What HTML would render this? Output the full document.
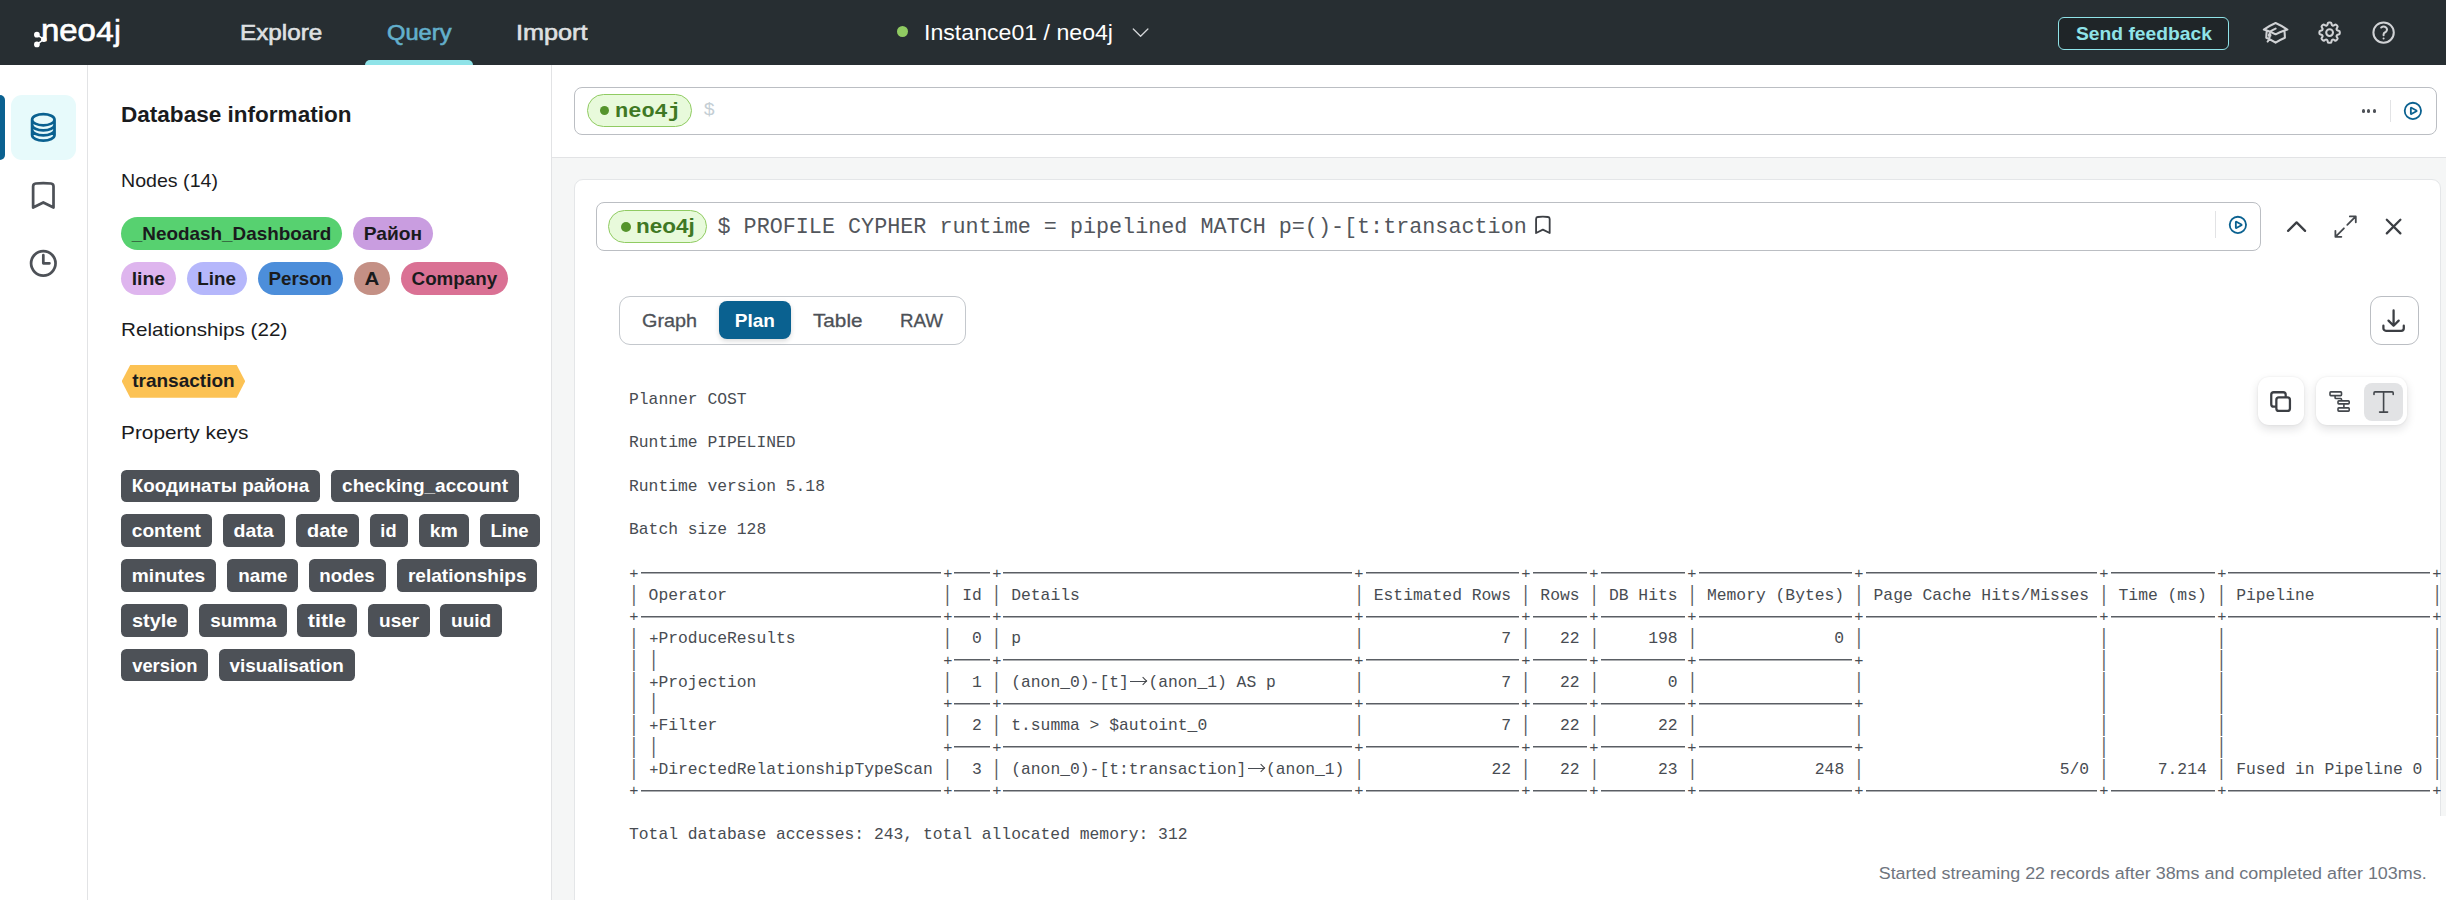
<!DOCTYPE html>
<html lang="en"><head><meta charset="utf-8"><title>neo4j Query</title>
<style>
*{box-sizing:border-box}
html,body{margin:0;padding:0}
body{width:2446px;height:900px;overflow:hidden;position:relative;background:#f5f6f6;font-family:"Liberation Sans",sans-serif;color:#1a1b1d}
.t{position:absolute;white-space:pre;display:block}
.abs{position:absolute}
svg{position:absolute;overflow:visible}
.ic{fill:none;stroke-linecap:round;stroke-linejoin:round}
#hdr{position:absolute;left:0;top:0;width:2446px;height:65px;background:#272e32}
#rail{position:absolute;left:0;top:65px;width:88px;height:835px;background:#fff;border-right:1px solid #e2e3e5}
#side{position:absolute;left:88px;top:65px;width:464px;height:835px;background:#fff;border-right:1px solid #e2e3e5}
#top{position:absolute;left:552px;top:65px;width:1894px;height:93px;background:#fff;border-bottom:1px solid #e2e3e5}
#card{position:absolute;left:574px;top:179px;width:1867px;height:740px;background:#fff;border:1px solid #e4e6e8;border-radius:9px;overflow:hidden}
.chip{position:absolute;height:32.64px;font:700 19.04px/34.64px "Liberation Sans",sans-serif;text-align:center;white-space:pre;color:#1a1b1d}
.chip b{display:inline-block;font-weight:700}
.n{border-radius:17px}
.p{border-radius:5.4px;background:#4d5157;color:#fff}
.box{position:absolute;border:1px solid #bbbec3;border-radius:8px;background:#fff}
.pill{position:absolute;border:1px solid #90cb62;background:#e8fadb;border-radius:17px}
pre{position:absolute;margin:0;left:629px;top:388.7px;font:400 16.334px/21.76px "Liberation Mono",monospace;color:#484c52;white-space:pre}
pre .d{color:transparent;background:linear-gradient(#5a5e64,#5a5e64) no-repeat 2px 8.5px/calc(100% - 4px) 1.5px}
pre i{display:inline-block;font-style:normal;transform:scaleY(1.3);transform-origin:50% 52%;color:#5a5e64}
pre b{display:inline-block;font-weight:400;transform:scale(.94)}
pre .ar{position:relative;color:transparent}
pre .ar::before{content:"";position:absolute;left:1.5px;top:8.3px;width:16px;height:1.1px;background:#484c52}
pre .ar::after{content:"";position:absolute;left:11.2px;top:5.6px;width:6px;height:6px;border-top:1.1px solid #3c3f44;border-right:1.1px solid #3c3f44;transform:rotate(45deg);box-sizing:border-box}
</style></head><body>

<div id="hdr">
<svg style="left:30px;top:12px" width="100" height="44" viewBox="30 12 100 44">
<g stroke="#fff" stroke-width="1.5" fill="#fff"><line x1="36.9" y1="34.7" x2="43.8" y2="39.3"/><line x1="43.8" y1="39.3" x2="36.9" y2="44.4"/>
<circle cx="36.9" cy="34.7" r="2.85" stroke="none"/><circle cx="43.8" cy="39.3" r="2.7" stroke="none"/><circle cx="36.9" cy="44.4" r="2.85" stroke="none"/></g>
<text y="41" font-family="Liberation Sans, sans-serif" fill="#fff" stroke="#fff" stroke-width="0.7"><tspan x="40.9" font-size="31.4" textLength="55" lengthAdjust="spacingAndGlyphs">neo</tspan><tspan x="96.3" font-size="27.7" textLength="17.4" lengthAdjust="spacingAndGlyphs">4</tspan><tspan x="114.2" font-size="29">j</tspan></text>
</svg>
<span class="t" style="left:240.00px;transform-origin:0 50%;top:22.00px;font:400 21.76px/1 'Liberation Sans', sans-serif;color:#dfe0e2;transform:scaleX(1.1146);-webkit-text-stroke:0.6px #dfe0e2;">Explore</span>
<span class="t" style="left:386.60px;transform-origin:0 50%;top:22.00px;font:400 21.76px/1 'Liberation Sans', sans-serif;color:#63b0cc;transform:scaleX(1.0889);-webkit-text-stroke:0.6px #63b0cc;">Query</span>
<span class="t" style="left:515.80px;transform-origin:0 50%;top:22.00px;font:400 21.76px/1 'Liberation Sans', sans-serif;color:#dfe0e2;transform:scaleX(1.1599);-webkit-text-stroke:0.6px #dfe0e2;">Import</span>
<div class="abs" style="left:365px;top:60px;width:108px;height:5px;background:#8fe3e8;border-radius:5px 5px 0 0"></div>
<div class="abs" style="left:897px;top:26px;width:11px;height:11px;border-radius:50%;background:#90cb62"></div>
<span class="t" style="left:924.00px;transform-origin:0 50%;top:22.00px;font:400 21.76px/1 'Liberation Sans', sans-serif;color:#fff;transform:scaleX(1.0632);">Instance01 / neo4j</span>
<svg class="ic" style="left:1127.4px;top:19.4px" width="27.2" height="27.2" viewBox="0 0 24 24" stroke="#d5d7da" stroke-width="1.3"><path d="m19.5 8.25-7.5 7.5-7.5-7.5" transform="translate(12 12) scale(0.86) translate(-12 -12)"/></svg>
<div class="abs" style="left:2058px;top:17px;width:171px;height:33px;border:1px solid #8fe3e8;border-radius:6px;background:#1f2528"></div>
<span class="t" style="left:2075.50px;transform-origin:0 50%;top:24.00px;font:700 19.04px/1 'Liberation Sans', sans-serif;color:#8fe3e8;transform:scaleX(1.0124);">Send feedback</span>
<svg class="ic" style="left:2262.10px;top:18.90px" width="27.2" height="27.2" viewBox="0 0 24 24" stroke="#d0d2d5" stroke-width="1.8"><path d="M4.26 10.147a60.438 60.438 0 0 0-.491 6.347A48.62 48.62 0 0 1 12 20.904a48.62 48.62 0 0 1 8.232-4.41 60.46 60.46 0 0 0-.491-6.347m-15.482 0a50.636 50.636 0 0 0-2.658-.813A59.906 59.906 0 0 1 12 3.493a59.903 59.903 0 0 1 10.399 5.84c-.896.248-1.783.52-2.658.814m-15.482 0A50.717 50.717 0 0 1 12 13.489a50.702 50.702 0 0 1 7.74-3.342M6.75 15a.75.75 0 1 0 0-1.5.75.75 0 0 0 0 1.5Zm0 0v-3.675A55.378 55.378 0 0 1 12 8.443m-7.007 11.55A5.981 5.981 0 0 0 6.75 15.75v-1.5"/></svg>
<svg class="ic" style="left:2316.00px;top:19.00px" width="27.2" height="27.2" viewBox="0 0 24 24" stroke="#d0d2d5" stroke-width="1.8"><path d="M10.343 3.94c.09-.542.56-.94 1.11-.94h1.093c.55 0 1.02.398 1.11.94l.149.894c.07.424.384.764.78.93.398.164.855.142 1.205-.108l.737-.527a1.125 1.125 0 0 1 1.45.12l.773.774c.39.389.44 1.002.12 1.45l-.527.737c-.25.35-.272.806-.107 1.204.165.397.505.71.93.78l.893.15c.543.09.94.559.94 1.109v1.094c0 .55-.397 1.02-.94 1.11l-.894.149c-.424.07-.764.383-.929.78-.165.398-.143.854.107 1.204l.527.738c.32.447.269 1.06-.12 1.45l-.774.773a1.125 1.125 0 0 1-1.449.12l-.738-.527c-.35-.25-.806-.272-1.203-.107-.398.165-.71.505-.781.929l-.149.894c-.09.542-.56.94-1.11.94h-1.094c-.55 0-1.019-.398-1.11-.94l-.148-.894c-.071-.424-.384-.764-.781-.93-.398-.164-.854-.142-1.204.108l-.738.527c-.447.32-1.06.269-1.45-.12l-.773-.774a1.125 1.125 0 0 1-.12-1.45l.527-.737c.25-.35.272-.806.108-1.204-.165-.397-.506-.71-.93-.78l-.894-.15c-.542-.09-.94-.56-.94-1.109v-1.094c0-.55.398-1.02.94-1.11l.894-.149c.424-.07.765-.383.93-.78.165-.398.143-.854-.108-1.204l-.526-.738a1.125 1.125 0 0 1 .12-1.45l.773-.773a1.125 1.125 0 0 1 1.45-.12l.737.527c.35.25.807.272 1.204.107.397-.165.71-.505.78-.929l.15-.894Z"/><path d="M15 12a3 3 0 1 1-6 0 3 3 0 0 1 6 0Z"/></svg>
<svg class="ic" style="left:2370.10px;top:18.90px" width="27.2" height="27.2" viewBox="0 0 24 24" stroke="#d0d2d5" stroke-width="1.8"><path d="M9.879 7.519c1.171-1.025 3.071-1.025 4.242 0 1.172 1.025 1.172 2.687 0 3.712-.203.179-.43.326-.67.442-.745.361-1.45.999-1.45 1.827v.75M21 12a9 9 0 1 1-18 0 9 9 0 0 1 18 0Zm-9 5.250h.008v.008H12v-.008Z"/></svg>
</div>
<div id="rail"></div>
<div class="abs" style="left:0;top:95px;width:5px;height:65px;background:#0a6190;border-radius:0 5px 5px 0"></div>
<div class="abs" style="left:11px;top:95px;width:65.3px;height:65px;background:#e7fafb;border-radius:11px"></div>
<svg class="ic" style="left:26.98px;top:111.08px" width="32.64" height="32.64" viewBox="0 0 24 24" stroke="#0a6190" stroke-width="2"><path d="M20.25 6.375c0 2.278-3.694 4.125-8.25 4.125S3.75 8.653 3.75 6.375m16.5 0c0-2.278-3.694-4.125-8.25-4.125S3.75 4.097 3.75 6.375m16.5 0v11.25c0 2.278-3.694 4.125-8.25 4.125s-8.25-1.847-8.25-4.125V6.375m16.5 0v3.75m-16.5-3.75v3.75m16.5 0v3.75C20.25 16.153 16.556 18 12 18s-8.25-1.847-8.25-4.125v-3.75m16.5 0c0 2.278-3.694 4.125-8.25 4.125s-8.25-1.847-8.25-4.125"/></svg>
<svg class="ic" style="left:27.08px;top:179.18px" width="32.64" height="32.64" viewBox="0 0 24 24" stroke="#4d5157" stroke-width="2"><path d="M17.593 3.322c1.1.128 1.907 1.077 1.907 2.185V21L12 17.25 4.5 21V5.507c0-1.108.806-2.057 1.907-2.185a48.507 48.507 0 0 1 11.186 0Z"/></svg>
<svg class="ic" style="left:27.08px;top:247.08px" width="32.64" height="32.64" viewBox="0 0 24 24" stroke="#4d5157" stroke-width="2"><path d="M12 6v6h4.5m4.5 0a9 9 0 1 1-18 0 9 9 0 0 1 18 0Z"/></svg>
<div id="side"></div>
<span class="t" style="left:121.00px;transform-origin:0 50%;top:104.00px;font:700 21.76px/1 'Liberation Sans', sans-serif;color:#1a1b1d;transform:scaleX(1.0365);">Database information</span>
<span class="t" style="left:121.00px;transform-origin:0 50%;top:171.00px;font:400 19.04px/1 'Liberation Sans', sans-serif;color:#1a1b1d;transform:scaleX(1.0302);">Nodes (14)</span>
<span class="t" style="left:120.80px;transform-origin:0 50%;top:320.00px;font:400 19.04px/1 'Liberation Sans', sans-serif;color:#1a1b1d;transform:scaleX(1.0842);">Relationships (22)</span>
<span class="t" style="left:120.80px;transform-origin:0 50%;top:423.00px;font:400 19.04px/1 'Liberation Sans', sans-serif;color:#1a1b1d;transform:scaleX(1.0942);">Property keys</span>
<div class="chip n" style="left:121.0px;top:217.20px;width:220.8px;background:#57d170;"><b style="transform:scaleX(0.9923)">_Neodash_Dashboard</b></div>
<div class="chip n" style="left:353.0px;top:217.20px;width:79.7px;background:#c99de0;"><b style="transform:scaleX(1.0076)">Район</b></div>
<div class="chip n" style="left:121.0px;top:262.00px;width:54.9px;background:#deb5ee;"><b style="transform:scaleX(1.0214)">line</b></div>
<div class="chip n" style="left:186.9px;top:262.00px;width:60.1px;background:#b5b7fb;"><b style="transform:scaleX(0.9891)">Line</b></div>
<div class="chip n" style="left:258.0px;top:262.00px;width:85.0px;background:#4c8eda;"><b style="transform:scaleX(0.9856)">Person</b></div>
<div class="chip n" style="left:353.8px;top:262.00px;width:36.2px;background:#c49085;"><b style="transform:scaleX(1.0764)">A</b></div>
<div class="chip n" style="left:401.0px;top:262.00px;width:107.0px;background:#da7194;"><b style="transform:scaleX(0.9871)">Company</b></div>
<div class="chip" style="left:121.7px;top:365px;width:123.5px;line-height:32.64px;background:#fcc254;clip-path:polygon(8.5px 0,calc(100% - 8.5px) 0,100% 50%,calc(100% - 8.5px) 100%,8.5px 100%,0 50%)"><b>transaction</b></div>
<div class="chip p" style="left:121.0px;top:470.00px;width:198.8px;height:31.9px;line-height:31.6px;"><b style="transform:scaleX(0.9913)">Коодинаты района</b></div>
<div class="chip p" style="left:331.3px;top:470.00px;width:187.3px;height:31.9px;line-height:31.6px;"><b style="transform:scaleX(0.9990)">checking_account</b></div>
<div class="chip p" style="left:121.0px;top:514.10px;width:90.7px;"><b style="transform:scaleX(1.0082)">content</b></div>
<div class="chip p" style="left:223.2px;top:514.10px;width:61.6px;"><b style="transform:scaleX(1.0271)">data</b></div>
<div class="chip p" style="left:296.3px;top:514.10px;width:62.3px;"><b style="transform:scaleX(1.0450)">date</b></div>
<div class="chip p" style="left:370.1px;top:514.10px;width:37.6px;"><b style="transform:scaleX(0.9573)">id</b></div>
<div class="chip p" style="left:419.2px;top:514.10px;width:49.6px;"><b style="transform:scaleX(1.0249)">km</b></div>
<div class="chip p" style="left:480.3px;top:514.10px;width:59.5px;"><b style="transform:scaleX(0.9738)">Line</b></div>
<div class="chip p" style="left:121.0px;top:559.30px;width:94.8px;"><b style="transform:scaleX(1.0059)">minutes</b></div>
<div class="chip p" style="left:227.0px;top:559.30px;width:70.8px;"><b style="transform:scaleX(0.9936)">name</b></div>
<div class="chip p" style="left:309.0px;top:559.30px;width:76.7px;"><b style="transform:scaleX(0.9867)">nodes</b></div>
<div class="chip p" style="left:397.0px;top:559.30px;width:140.0px;"><b style="transform:scaleX(1.0012)">relationships</b></div>
<div class="chip p" style="left:121.0px;top:604.30px;width:66.9px;"><b style="transform:scaleX(1.0486)">style</b></div>
<div class="chip p" style="left:199.2px;top:604.30px;width:87.6px;"><b style="transform:scaleX(0.9934)">summa</b></div>
<div class="chip p" style="left:297.0px;top:604.30px;width:59.8px;"><b style="transform:scaleX(1.1346)">title</b></div>
<div class="chip p" style="left:368.1px;top:604.30px;width:61.6px;"><b style="transform:scaleX(0.9999)">user</b></div>
<div class="chip p" style="left:440.2px;top:604.30px;width:61.5px;"><b style="transform:scaleX(0.9982)">uuid</b></div>
<div class="chip p" style="left:121.0px;top:649.40px;width:86.8px;height:31.7px;line-height:33.6px;"><b style="transform:scaleX(0.9660)">version</b></div>
<div class="chip p" style="left:219.1px;top:649.40px;width:135.7px;height:31.7px;line-height:33.6px;"><b style="transform:scaleX(0.9914)">visualisation</b></div>
<div id="top"></div>
<div class="box" style="left:574px;top:87px;width:1863px;height:48px"></div>
<div class="pill" style="left:587px;top:94px;width:104.5px;height:32.7px"></div>
<div class="abs" style="left:599.8px;top:106.1px;width:9px;height:9px;border-radius:50%;background:#55942c"></div>
<span class="t" style="left:614.80px;transform-origin:0 50%;top:101.00px;font:700 21px/1 'Liberation Mono', monospace;color:#3f7824;transform:scaleX(1.0474);">neo4j</span>
<span class="t" style="left:703.50px;transform-origin:0 50%;top:101.00px;font:400 19.04px/1 'Liberation Mono', monospace;color:#c4ced4;">$</span>
<div class="abs" style="left:2361.65px;top:109.25px;width:3.3px;height:3.3px;border-radius:50%;background:#4d5157"></div>
<div class="abs" style="left:2367.15px;top:109.25px;width:3.3px;height:3.3px;border-radius:50%;background:#4d5157"></div>
<div class="abs" style="left:2372.65px;top:109.25px;width:3.3px;height:3.3px;border-radius:50%;background:#4d5157"></div>
<div class="abs" style="left:2390px;top:100px;width:1px;height:22px;background:#e2e3e5"></div>
<svg class="ic" style="left:2402.02px;top:100.02px" width="21.76" height="21.76" viewBox="0 0 24 24" stroke="#0a6190" stroke-width="2"><path d="M21 12a9 9 0 1 1-18 0 9 9 0 0 1 18 0Z"/><path d="M15.91 11.672a.375.375 0 0 1 0 .656l-5.603 3.113a.375.375 0 0 1-.557-.328V8.887c0-.286.307-.466.557-.327l5.603 3.112Z"/></svg>
<div id="card"></div>
<div class="box" style="left:596px;top:202px;width:1665px;height:49px"></div>
<div class="pill" style="left:608px;top:210px;width:99px;height:32.7px"></div>
<div class="abs" style="left:620.5px;top:221.8px;width:10.2px;height:10.2px;border-radius:50%;background:#55942c"></div>
<span class="t" style="left:636.30px;transform-origin:0 50%;top:216.00px;font:700 20.4px/1 'Liberation Sans', sans-serif;color:#3f7824;transform:scaleX(1.1039);">neo4j</span>
<span class="t" style="left:717.50px;transform-origin:0 50%;top:217.00px;font:400 21.76px/1 'Liberation Mono', monospace;color:#52565c;">$ PROFILE CYPHER runtime = pipelined MATCH p=()-[t:transaction</span>
<svg class="ic" style="left:1532.02px;top:214.02px" width="21.76" height="21.76" viewBox="0 0 24 24" stroke="#3c3f44" stroke-width="2"><path d="M17.593 3.322c1.1.128 1.907 1.077 1.907 2.185V21L12 17.25 4.5 21V5.507c0-1.108.806-2.057 1.907-2.185a48.507 48.507 0 0 1 11.186 0Z"/></svg>
<div class="abs" style="left:2215px;top:211px;width:1px;height:27px;background:#e2e3e5"></div>
<svg class="ic" style="left:2227.02px;top:213.92px" width="21.76" height="21.76" viewBox="0 0 24 24" stroke="#0a6190" stroke-width="2"><path d="M21 12a9 9 0 1 1-18 0 9 9 0 0 1 18 0Z"/><path d="M15.91 11.672a.375.375 0 0 1 0 .656l-5.603 3.113a.375.375 0 0 1-.557-.328V8.887c0-.286.307-.466.557-.327l5.603 3.112Z"/></svg>
<svg class="ic" style="left:2282.90px;top:212.90px" width="27.2" height="27.2" viewBox="0 0 24 24" stroke="#3c3f44" stroke-width="2"><path d="m4.5 15.75 7.5-7.5 7.5 7.5"/></svg>
<svg class="ic" style="left:2332.00px;top:213.00px" width="27.2" height="27.2" viewBox="0 0 24 24" stroke="#45494e" stroke-width="1.6"><path d="M13.5 10.5 21 3m0 0h-5.25M21 3v5.25M10.5 13.5 3 21m0 0h5.25M3 21v-5.25"/></svg>
<svg class="ic" style="left:2380.10px;top:212.90px" width="27.2" height="27.2" viewBox="0 0 24 24" stroke="#3c3f44" stroke-width="2"><path d="M6 18 18 6M6 6l12 12"/></svg>
<div class="abs" style="left:619px;top:296px;width:347px;height:49px;border:1px solid #c4c8cd;border-radius:11px;background:#fff"></div>
<div class="abs" style="left:719px;top:301px;width:72px;height:38px;background:#0a6190;border-radius:8px;box-shadow:0 2px 5px rgba(0,0,0,.15)"></div>
<span class="t" style="left:641.50px;transform-origin:0 50%;top:311.00px;font:400 19.04px/1 'Liberation Sans', sans-serif;color:#4d5157;transform:scaleX(1.0396);-webkit-text-stroke:0.3px #4d5157;">Graph</span>
<span class="t" style="left:734.80px;transform-origin:0 50%;top:311.00px;font:700 19.04px/1 'Liberation Sans', sans-serif;color:#fff;">Plan</span>
<span class="t" style="left:813.00px;transform-origin:0 50%;top:311.00px;font:400 19.04px/1 'Liberation Sans', sans-serif;color:#4d5157;transform:scaleX(1.0879);-webkit-text-stroke:0.3px #4d5157;">Table</span>
<span class="t" style="left:900.00px;transform-origin:0 50%;top:311.00px;font:400 19.04px/1 'Liberation Sans', sans-serif;color:#4d5157;transform:scaleX(0.9839);-webkit-text-stroke:0.3px #4d5157;">RAW</span>
<div class="abs" style="left:2370px;top:296px;width:49px;height:49px;border:1px solid #bbbec3;border-radius:11px;background:#fff"></div>
<svg class="ic" style="left:2380.00px;top:307.10px" width="27.2" height="27.2" viewBox="0 0 24 24" stroke="#3c3f44" stroke-width="2"><path d="M3 16.5v2.25A2.25 2.25 0 0 0 5.25 21h13.5A2.25 2.25 0 0 0 21 18.750V16.5M16.5 12 12 16.5m0 0L7.5 12m4.5 4.5V3"/></svg>
<div class="abs" style="left:2257.8px;top:377.4px;width:46.5px;height:47.5px;border-radius:11px;background:#fff;box-shadow:0 4px 10px rgba(26,27,29,.13),0 0 2px rgba(26,27,29,.08)"></div>
<svg class="ic" style="left:2266.90px;top:387.90px" width="27.2" height="27.2" viewBox="0 0 24 24" stroke="#3c3f44" stroke-width="2"><path d="M16.5 8.25V6a2.25 2.25 0 0 0-2.25-2.25H6A2.25 2.25 0 0 0 3.75 6v8.25A2.25 2.25 0 0 0 6 16.5h2.25m8.25-8.25H18a2.25 2.25 0 0 1 2.25 2.25V18A2.25 2.25 0 0 1 18 20.25h-7.5A2.250 2.250 0 0 1 8.25 18v-1.5m8.25-8.25h-6a2.25 2.25 0 0 0-2.25 2.25v6"/></svg>
<div class="abs" style="left:2316.4px;top:377.4px;width:91px;height:47.5px;border-radius:11px;background:#fff;box-shadow:0 4px 10px rgba(26,27,29,.13),0 0 2px rgba(26,27,29,.08)"></div>
<div class="abs" style="left:2364.1px;top:383.1px;width:38.5px;height:37.7px;border-radius:8px;background:#e2e3e5"></div>
<svg class="ic" style="left:2320px;top:380px" width="90" height="44" viewBox="2320 380 90 44" stroke="#43474c" stroke-width="1.6">
<rect x="2330" y="391.9" width="11.5" height="3.7" rx="0.8"/><rect x="2338" y="400.9" width="11.2" height="3" rx="0.8"/><rect x="2338" y="407.9" width="11.2" height="3.2" rx="0.8"/>
<path d="M2335.1 396v1.7q0 .8.8.8h4.8q.8 0 .8.800v1M2343.900 404.400v3"/>
<path d="M2374 394.400v-1.500a1 1 0 0 1 1-1h17.200a1 1 0 0 1 1 1v1.500M2383.600 391.900V412M2379.600 412.100h8"/></svg>
<div class="abs" style="left:575px;top:360px;width:1865.5px;height:540px;overflow:hidden"><pre style="left:54px;top:28.7px">Planner COST

Runtime PIPELINED

Runtime version 5.18

Batch size 128

<b>+</b><span class="d">-------------------------------</span><b>+</b><span class="d">----</span><b>+</b><span class="d">------------------------------------</span><b>+</b><span class="d">----------------</span><b>+</b><span class="d">------</span><b>+</b><span class="d">---------</span><b>+</b><span class="d">----------------</span><b>+</b><span class="d">------------------------</span><b>+</b><span class="d">-----------</span><b>+</b><span class="d">---------------------</span><b>+</b>
<i>|</i> Operator                      <i>|</i> Id <i>|</i> Details                            <i>|</i> Estimated Rows <i>|</i> Rows <i>|</i> DB Hits <i>|</i> Memory (Bytes) <i>|</i> Page Cache Hits/Misses <i>|</i> Time (ms) <i>|</i> Pipeline            <i>|</i>
<b>+</b><span class="d">-------------------------------</span><b>+</b><span class="d">----</span><b>+</b><span class="d">------------------------------------</span><b>+</b><span class="d">----------------</span><b>+</b><span class="d">------</span><b>+</b><span class="d">---------</span><b>+</b><span class="d">----------------</span><b>+</b><span class="d">------------------------</span><b>+</b><span class="d">-----------</span><b>+</b><span class="d">---------------------</span><b>+</b>
<i>|</i> <b>+</b>ProduceResults               <i>|</i>  0 <i>|</i> p                                  <i>|</i>              7 <i>|</i>   22 <i>|</i>     198 <i>|</i>              0 <i>|</i>                        <i>|</i>           <i>|</i>                     <i>|</i>
<i>|</i> <i>|</i>                             <b>+</b><span class="d">----</span><b>+</b><span class="d">------------------------------------</span><b>+</b><span class="d">----------------</span><b>+</b><span class="d">------</span><b>+</b><span class="d">---------</span><b>+</b><span class="d">----------------</span><b>+</b>                        <i>|</i>           <i>|</i>                     <i>|</i>
<i>|</i> <b>+</b>Projection                   <i>|</i>  1 <i>|</i> (anon_0)-[t]<span class="ar">-&gt;</span>(anon_1) AS p        <i>|</i>              7 <i>|</i>   22 <i>|</i>       0 <i>|</i>                <i>|</i>                        <i>|</i>           <i>|</i>                     <i>|</i>
<i>|</i> <i>|</i>                             <b>+</b><span class="d">----</span><b>+</b><span class="d">------------------------------------</span><b>+</b><span class="d">----------------</span><b>+</b><span class="d">------</span><b>+</b><span class="d">---------</span><b>+</b><span class="d">----------------</span><b>+</b>                        <i>|</i>           <i>|</i>                     <i>|</i>
<i>|</i> <b>+</b>Filter                       <i>|</i>  2 <i>|</i> t.summa &gt; $autoint_0               <i>|</i>              7 <i>|</i>   22 <i>|</i>      22 <i>|</i>                <i>|</i>                        <i>|</i>           <i>|</i>                     <i>|</i>
<i>|</i> <i>|</i>                             <b>+</b><span class="d">----</span><b>+</b><span class="d">------------------------------------</span><b>+</b><span class="d">----------------</span><b>+</b><span class="d">------</span><b>+</b><span class="d">---------</span><b>+</b><span class="d">----------------</span><b>+</b>                        <i>|</i>           <i>|</i>                     <i>|</i>
<i>|</i> <b>+</b>DirectedRelationshipTypeScan <i>|</i>  3 <i>|</i> (anon_0)-[t:transaction]<span class="ar">-&gt;</span>(anon_1) <i>|</i>             22 <i>|</i>   22 <i>|</i>      23 <i>|</i>            248 <i>|</i>                    5/0 <i>|</i>     7.214 <i>|</i> Fused in Pipeline 0 <i>|</i>
<b>+</b><span class="d">-------------------------------</span><b>+</b><span class="d">----</span><b>+</b><span class="d">------------------------------------</span><b>+</b><span class="d">----------------</span><b>+</b><span class="d">------</span><b>+</b><span class="d">---------</span><b>+</b><span class="d">----------------</span><b>+</b><span class="d">------------------------</span><b>+</b><span class="d">-----------</span><b>+</b><span class="d">---------------------</span><b>+</b>

Total database accesses: 243, total allocated memory: 312</pre></div>
<div class="abs" style="left:2440px;top:816px;width:6px;height:84px;background:#fff"></div>
<span class="t" style="right:19.70px;transform-origin:100% 50%;top:865.00px;font:400 16.32px/1 'Liberation Sans', sans-serif;color:#6f757e;transform:scaleX(1.0989);">Started streaming 22 records after 38ms and completed after 103ms.</span>
</body></html>
